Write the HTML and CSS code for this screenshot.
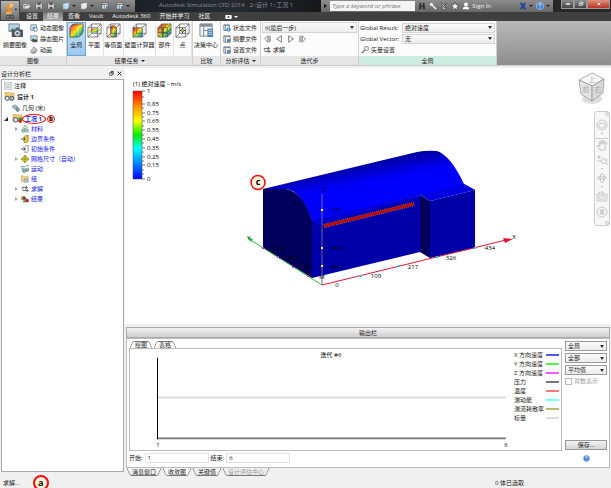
FILE: index.html
```html
<!DOCTYPE html>
<html lang="zh-CN">
<head>
  <meta charset="UTF-8">
  <meta name="viewport" content="width=device-width, initial-scale=1">
  <title>Autodesk Simulation CFD 2014</title>
  <link rel="stylesheet" href="styles.css">
</head>
<body>

  <!-- Icon sprite -->
  <svg class="sprite" aria-hidden="true">
    <defs>
      <linearGradient id="heat" x1="0" y1="0" x2="1" y2="1">
        <stop offset="0.1" stop-color="#e8271c"/><stop offset="0.35" stop-color="#f9a01b"/>
        <stop offset="0.5" stop-color="#f4e21f"/><stop offset="0.68" stop-color="#5ccb5f"/>
        <stop offset="0.95" stop-color="#2a6fd6"/>
      </linearGradient>
    </defs>
    <symbol id="i-open" viewBox="0 0 10 10"><path d="M1 8V3h3l1 1h3v1" fill="none" stroke="#eee"/><path d="M1 8l2-3h6L7 8z" fill="#ddd"/></symbol>
    <symbol id="i-save" viewBox="0 0 10 10"><path d="M1 1h8v8H1z" fill="#e8e8e8" stroke="#555"/><path d="M3 1h4v3H3zM3 6h4v3H3z" fill="#555"/></symbol>
    <symbol id="i-cube" viewBox="0 0 10 10"><path d="M1 3l3-2h5v6L6 9H1z" fill="#a9d3ea" stroke="#49728c" stroke-width=".6"/><path d="M1 3h5v6M6 3l3-2" fill="none" stroke="#fff" stroke-width=".8"/></symbol>
    <symbol id="i-cube2" viewBox="0 0 10 10"><path d="M1 3l3-2h5v6L6 9H1z" fill="#e5e5e5" stroke="#555" stroke-width=".6"/><path d="M1 3h5v6M6 3l3-2" fill="none" stroke="#fff" stroke-width=".8"/></symbol>
    <symbol id="i-layout" viewBox="0 0 10 10"><path d="M1 1h8v8H1z" fill="#eee" stroke="#555"/><path d="M1 3h8M4 3v6" stroke="#555"/><path d="M6 5h3v4H6z" fill="#4a86b8"/></symbol>
    <symbol id="i-camera" viewBox="0 0 16 16"><path d="M1 1h11v8H1z" fill="#b7d6ea" stroke="#6f8494"/><path d="M1 9l4-4 3 3 2-2 2 3z" fill="#6f9f65"/><rect x="4" y="7" width="12" height="8" rx="1" fill="#4d565e"/><path d="M8 5h4v2H8z" fill="#4d565e"/><circle cx="10" cy="11" r="3" fill="#e9eef2" stroke="#889"/><circle cx="10" cy="11" r="1.3" fill="#557"/></symbol>
    <symbol id="i-dynpic" viewBox="0 0 10 10"><path d="M1 1h7v7H1z" fill="#d8e8f2" stroke="#6f8494"/><path d="M3 4l2-1 2 1v3H3z" fill="#72a8cc"/><circle cx="7" cy="7" r="2.3" fill="#fff" stroke="#4b6f8c"/></symbol>
    <symbol id="i-statpic" viewBox="0 0 10 10"><path d="M1 1h8v6H1z" fill="#c0dbe8" stroke="#6f8494"/><path d="M1 7l3-3 2 2 1-1 2 2z" fill="#44734b"/><path d="M3 6h6v3H3z" fill="#434a50"/></symbol>
    <symbol id="i-anim" viewBox="0 0 10 10"><path d="M1 6l4-5 4 4-3 4H3z" fill="#fff" stroke="#555" stroke-width=".8"/><path d="M3 6l3-3 1 4zM1 8h5" fill="none" stroke="#555" stroke-width=".8"/></symbol>
    <symbol id="i-global" viewBox="0 0 16 16"><path d="M1 5Q3 1 6 1h9v8q-1 4-5 6H1z" fill="url(#heat)" stroke="#345" stroke-width=".8"/><path d="M1 5h9v10M10 5l5-4" fill="none" stroke="#fff" stroke-opacity=".35"/></symbol>
    <symbol id="i-box" viewBox="0 0 16 16"><path d="M1 5l4-4h10v10l-4 4H1zM1 5h10v10M11 5l4-4M5 1v10h10M5 11l-4 4" fill="none" stroke="#555b61" stroke-width=".8"/></symbol>
    <symbol id="i-plane" viewBox="0 0 16 16"><path d="M1 10l4-4h10l-4 4z" fill="url(#heat)"/><use href="#i-box"/></symbol>
    <symbol id="i-iso" viewBox="0 0 16 16"><path d="M5 4q3-3 6 0v10q-3 2-6 0z" fill="url(#heat)" stroke="#9b301c" stroke-width=".6"/><use href="#i-box"/></symbol>
    <symbol id="i-wall" viewBox="0 0 16 16"><path d="M1 5h10v10H1z" fill="url(#heat)"/><use href="#i-box"/></symbol>
    <symbol id="i-part" viewBox="0 0 16 16"><path d="M1 5l4-4h10v10l-4 4H1z" fill="url(#heat)"/><path d="M1 10h10M6 5v10l1-10 4-4M11 10l4-4" fill="none" stroke="#345" stroke-width=".8"/><use href="#i-box"/></symbol>
    <symbol id="i-point" viewBox="0 0 16 16"><use href="#i-box"/><path d="M8 5v6M5 8h6" stroke="#444"/><circle cx="8" cy="8" r="1.6" fill="#b8cc30" stroke="#333" stroke-width=".5"/></symbol>
    <symbol id="i-decision" viewBox="0 0 16 16"><path d="M1 1h13v13H1z" fill="#f4f4f4" stroke="#7b858d"/><path d="M1 1h13v3H1z" fill="#848e96"/><path d="M5 4v10M5 8h9" stroke="#7b858d"/><rect x="9" y="6" width="6" height="9" fill="#4e86b0"/><path d="M10 8h4M10 10h4M10 12h4" stroke="#dcebf5" stroke-width=".8"/></symbol>
    <symbol id="i-doc" viewBox="0 0 10 10"><path d="M1 1h8v8H1z" fill="#f3f6f8" stroke="#69747d"/><path d="M1 2h8M3 3v6" stroke="#69747d"/><path d="M5 5h4v4H5z" fill="#5689ae"/></symbol>
    <symbol id="i-docinfo" viewBox="0 0 10 10"><path d="M1 1h7v7H1z" fill="#f3f6f8" stroke="#69747d"/><path d="M1 2h7M3 3v5" stroke="#69747d"/><circle cx="7" cy="7" r="2.7" fill="#2e8ade"/><path d="M7 5v1M7 6.500v2" stroke="#fff"/></symbol>
    <symbol id="i-solve" viewBox="0 0 10 10"><path d="M1 3h7M6 1l2 2-2 1M2 7h7M7 5l2 2-2 2" fill="none" stroke="#444"/><path d="M1 5h2M5 5h2" stroke="#444"/></symbol>
    <symbol id="i-vector" viewBox="0 0 10 10"><path d="M1 9l5-5" stroke="#555" stroke-width="1.400"/><path d="M5 1h4v4L7 6 4 3z" fill="#fff" stroke="#555" stroke-width=".8"/></symbol>
    <symbol id="i-first" viewBox="0 0 10 10"><path d="M6 1v8L2 5zM9 1v8M7.500 1v8" fill="none" stroke="#555" stroke-width=".8"/></symbol>
    <symbol id="i-prev" viewBox="0 0 10 10"><path d="M8 1v8L2 5z" fill="none" stroke="#555" stroke-width=".9"/></symbol>
    <symbol id="i-note" viewBox="0 0 10 10"><path d="M1 0h8v10H1z" fill="#edf1f4" stroke="#9da7ae"/><path d="M3 3h4M3 5h4M3 7h4" stroke="#9da7ae" stroke-width=".8"/></symbol>
    <symbol id="i-design" viewBox="0 0 12 10"><path d="M1 0h4l1 1h5v7H1z" fill="#f2ca73" stroke="#c79a43" stroke-width=".6"/><circle cx="3.500" cy="7" r="2.300" fill="#dbe5ea" stroke="#3d4a52"/><circle cx="8.500" cy="7" r="2.300" fill="#9dbfd2" stroke="#3d4a52"/></symbol>
    <symbol id="i-case" viewBox="0 0 12 10"><path d="M1 0h4l1 1h5v7H1z" fill="#f2ca73" stroke="#c79a43" stroke-width=".6"/><circle cx="4" cy="6.500" r="2.500" fill="#dbe5ea" stroke="#3d4a52"/><path d="M7 4h4v3H7z" fill="#2b9a43"/><circle cx="9" cy="8" r="2" fill="#c9281c"/></symbol>
    <symbol id="i-geom" viewBox="0 0 10 10"><path d="M1 2l3-1 3 2v4L4 6 1 5z" fill="#9fb9c8" stroke="#5f7785" stroke-width=".6"/><circle cx="7" cy="7" r="2.300" fill="#7d98a8" stroke="#4d6471" stroke-width=".6"/></symbol>
    <symbol id="i-mat" viewBox="0 0 10 10"><path d="M5 0l3 3-3 2-2-2z" fill="#dfe8dc" stroke="#61876b" stroke-width=".7"/><circle cx="3" cy="7" r="2.200" fill="#a3cfae" stroke="#4c7b60" stroke-width=".7"/><circle cx="7.500" cy="7" r="2" fill="#b5cfe2" stroke="#50748d" stroke-width=".7"/></symbol>
    <symbol id="i-bound" viewBox="0 0 10 10"><path d="M4 2l3-2h2v8L7 10H4z" fill="#e4c53d" stroke="#746628" stroke-width=".7"/><path d="M0 5h4M3 3l2 2-2 2" fill="none" stroke="#333"/></symbol>
    <symbol id="i-init" viewBox="0 0 10 10"><path d="M5 2l2-2h2v8L7 10H5z" fill="#f5f5f5" stroke="#666" stroke-width=".8"/><path d="M0 5h4M3 3l2 2-2 2" fill="none" stroke="#333"/></symbol>
    <symbol id="i-mesh" viewBox="0 0 10 10"><path d="M5 0l5 5-5 5-5-5z" fill="#d4cb35" stroke="#888629" stroke-width=".7"/><path d="M5 0v10M0 5h10" stroke="#77762b" stroke-width=".7"/></symbol>
    <symbol id="i-motion" viewBox="0 0 10 10"><path d="M0 2h5M0 4h3M6 1h4" stroke="#4f80a0"/><circle cx="4" cy="7" r="2.400" fill="#83b7c9" stroke="#3e6678" stroke-width=".7"/><circle cx="8" cy="6" r="2" fill="#8ebd88" stroke="#3e6678" stroke-width=".7"/></symbol>
    <symbol id="i-group" viewBox="0 0 10 10"><path d="M0 1h4l1 1h4v6H0z" fill="#f3cf82" stroke="#c99e4a" stroke-width=".6"/><path d="M4 5h5v4H4z" fill="#aac9df" stroke="#5e8199" stroke-width=".6"/></symbol>
    <symbol id="i-result" viewBox="0 0 10 10"><path d="M0 2l4-1 3 3-2 3-5-1z" fill="#e5a323"/><circle cx="4" cy="4" r="2" fill="#3550b5"/><circle cx="7.500" cy="7" r="2.300" fill="#cb2418"/><circle cx="4" cy="8" r="1.500" fill="#2e9a44"/></symbol>
    <symbol id="i-help" viewBox="0 0 10 10"><circle cx="5" cy="5" r="4.500" fill="#3d7edb" stroke="#bcd4f2" stroke-width=".8"/><path d="M3.500 4q0-2 1.700-1.800Q7 2.500 6.300 4L5 5.300V6M5 7v1" fill="none" stroke="#fff"/></symbol>
    <symbol id="i-binoc" viewBox="0 0 10 10"><path d="M2 1h2v3h2V1h2l1 8H6V6H4v3H1z" fill="#333"/></symbol>
    <symbol id="i-key" viewBox="0 0 10 10"><circle cx="3" cy="3" r="2" fill="#f4f4f4"/><path d="M4 4l5 5" stroke="#f4f4f4" stroke-width="1.700"/></symbol>
    <symbol id="i-dish" viewBox="0 0 10 10"><path d="M2 1q0 5 6 6zM4 6L2 9h5M5 4l4-3" fill="#eee" stroke="#333" stroke-width=".8"/></symbol>
    <symbol id="i-star" viewBox="0 0 10 10"><path d="M5 0l1.500 3.500L10 4 7.500 6.300 8 10 5 8 2 10l.5-3.700L0 4l3.500-.5z" fill="#eee" stroke="#333" stroke-width=".7"/></symbol>
    <symbol id="i-user" viewBox="0 0 10 10"><circle cx="5" cy="3" r="2.500" fill="#fff"/><path d="M1 9q0-3 3-3h2q3 0 3 3z" fill="#fff"/></symbol>
    <symbol id="i-exchange" viewBox="0 0 10 10"><path d="M1 1h3l1 2 1-2h3L7 5l2 4H6L5 7 4 9H1l2-4z" fill="#2545a5"/></symbol>
  </svg>

  <header class="top">
    <button class="app-btn" aria-label="CFD">
      <svg viewBox="0 0 20 20"><path d="M5 7l5-5 4 1-1 3-4 1 1 2 3 1-2 3-5 1-1-2 3-2z" fill="#f08a1c"/><path d="M10 2l4 1-1 3-4 1zM6 12l5 0 2-2-2 3-5 1z" fill="#ffc162"/><path d="M15 8h3l-1.500 2z" fill="#222"/><text x="10" y="19">CFD</text></svg>
    </button>

    <div class="titlebar">
      <nav class="quick" aria-label="Quick access">
        <button aria-label="打开"><svg><use href="#i-open"/></svg></button>
        <button aria-label="保存"><svg><use href="#i-save"/></svg></button>
        <button aria-label="另存为"><svg><use href="#i-save"/></svg></button>
        <button class="drop spaced" aria-label="着色"><svg><use href="#i-cube"/></svg></button>
        <button class="drop" aria-label="视图"><svg><use href="#i-cube2"/></svg></button>
        <button class="spaced" aria-label="窗口"><svg><use href="#i-layout"/></svg></button>
        <button class="drop spaced" aria-label="布局"><svg><use href="#i-layout"/></svg></button>
      </nav>
      <div class="caption">Autodesk Simulation CFD 2014 &nbsp; 2::设计 1::工况 1</div>
      <div class="infocenter">
        <span class="tri-right"></span>
        <input type="text" aria-label="Search" placeholder="Type a keyword or phrase">
        <button aria-label="Find"><svg><use href="#i-binoc"/></svg></button>
        <button aria-label="Subscription"><svg><use href="#i-key"/></svg></button>
        <button aria-label="Communication"><svg><use href="#i-dish"/></svg></button>
        <button aria-label="Favorites"><svg><use href="#i-star"/></svg></button>
        <button class="signin"><svg><use href="#i-user"/></svg>Sign In</button>
        <button class="drop exchange" aria-label="Exchange"><svg><use href="#i-exchange"/></svg></button>
        <button class="drop" aria-label="Help"><svg><use href="#i-help"/></svg></button>
      </div>
      <div class="winctl">
        <button aria-label="最小化"><svg viewBox="0 0 12 8"><path d="M3 4h6" stroke="#fff" stroke-width="2"/></svg></button>
        <button aria-label="还原"><svg viewBox="0 0 12 8"><path d="M3 3h4v3H3zM5 3V1h4v4H7" fill="none" stroke="#fff"/></svg></button>
        <button class="close" aria-label="关闭"><svg viewBox="0 0 12 8"><path d="M4 2l4 4M8 2L4 6" stroke="#fff" stroke-width="1.500"/></svg></button>
      </div>
    </div>

    <nav class="tabs">
      <a href="#">设置</a>
      <a href="#" class="active">结果</a>
      <a href="#">查看</a>
      <a href="#">Vault</a>
      <a href="#">Autodesk 360</a>
      <a href="#">开始并学习</a>
      <a href="#">社区</a>
      <button class="pill drop" aria-label="最小化功能区"><svg viewBox="0 0 8 5"><rect width="8" height="5" rx="1" fill="#fff"/><path d="M2 3l2-2 2 2z" fill="#333"/></svg></button>
    </nav>
  </header>

  <section class="ribbon">
    <div class="group g-image">
      <div class="group-body">
        <button class="big"><svg><use href="#i-camera"/></svg>摘要图像</button>
        <div class="stack">
          <button><svg><use href="#i-dynpic"/></svg>动态图像</button>
          <button><svg><use href="#i-statpic"/></svg>静态图片</button>
          <button><svg><use href="#i-anim"/></svg>动画</button>
        </div>
      </div>
      <div class="group-title">图像</div>
    </div>
    <div class="group g-task">
      <div class="group-body">
        <button class="big selected"><svg><use href="#i-global"/></svg>全局</button>
        <button class="big"><svg><use href="#i-plane"/></svg>平面</button>
        <button class="big"><svg><use href="#i-iso"/></svg>等值面</button>
        <button class="big"><svg><use href="#i-wall"/></svg>壁面计算器</button>
        <button class="big"><svg><use href="#i-part"/></svg>部件</button>
        <button class="big"><svg><use href="#i-point"/></svg>点</button>
      </div>
      <div class="group-title drop">结果任务</div>
    </div>
    <div class="group g-compare">
      <div class="group-body">
        <button class="big"><svg><use href="#i-decision"/></svg>决策中心</button>
      </div>
      <div class="group-title">比较</div>
    </div>
    <div class="group g-review">
      <div class="group-body">
        <div class="stack">
          <button><svg><use href="#i-docinfo"/></svg>状态文件</button>
          <button><svg><use href="#i-doc"/></svg>摘要文件</button>
          <button><svg><use href="#i-doc"/></svg>设置文件</button>
        </div>
      </div>
      <div class="group-title drop">分析评估</div>
    </div>
    <div class="group g-step">
      <div class="group-body">
        <div class="stack">
          <select aria-label="迭代步"><option>6(最后一步)</option></select>
          <div class="player">
            <button aria-label="第一步"><svg><use href="#i-first"/></svg></button>
            <button aria-label="上一步"><svg><use href="#i-prev"/></svg></button>
            <button class="flip" aria-label="下一步"><svg><use href="#i-prev"/></svg></button>
            <button class="flip" aria-label="最后一步"><svg><use href="#i-first"/></svg></button>
          </div>
          <button><svg><use href="#i-solve"/></svg>求解</button>
        </div>
      </div>
      <div class="group-title">迭代步</div>
    </div>
    <div class="group g-global">
      <div class="group-body">
        <div class="stack">
          <div class="pair"><label for="gres">Global Result:</label><select id="gres"><option>绝对速度</option></select></div>
          <div class="pair"><label for="gvec">Global Vector:</label><select id="gvec"><option>无</option></select></div>
          <button><svg><use href="#i-vector"/></svg>矢量设置</button>
        </div>
      </div>
      <div class="group-title">全局</div>
    </div>
  </section>

  <main class="workspace">
    <aside class="study">
      <div class="study-head">
        <span>设计分析栏</span>
        <button aria-label="浮动"><svg viewBox="0 0 8 8"><path d="M1 3h4v4H1zM3 3V1h4v4H5" fill="none" stroke="#222"/><path d="M3 1h4v1H3z"/></svg></button>
        <button aria-label="关闭"><svg viewBox="0 0 8 8"><path d="M1 1l6 6M7 1L1 7" stroke="#222" stroke-width="1.500"/></svg></button>
      </div>
      <ul class="tree">
        <li><div class="row"><svg><use href="#i-note"/></svg>注释</div></li>
        <li>
          <div class="row root"><svg><use href="#i-design"/></svg>设计 1</div>
          <ul>
            <li><div class="row"><i class="twist"></i><svg><use href="#i-geom"/></svg>几何 (米)</div></li>
            <li>
              <div class="row root case"><i class="twist open"></i><svg><use href="#i-case"/></svg><span class="ringed">工况 1<b class="mark small">b</b></span></div>
              <ul class="items">
                <li><div class="row"><i class="twist more"></i><svg><use href="#i-mat"/></svg>材料</div></li>
                <li><div class="row"><i class="twist"></i><svg><use href="#i-bound"/></svg>边界条件</div></li>
                <li><div class="row"><i class="twist"></i><svg><use href="#i-init"/></svg>初始条件</div></li>
                <li><div class="row"><i class="twist more"></i><svg><use href="#i-mesh"/></svg>网格尺寸（自动）</div></li>
                <li><div class="row"><i class="twist"></i><svg><use href="#i-motion"/></svg>运动</div></li>
                <li><div class="row"><i class="twist"></i><svg><use href="#i-group"/></svg>组</div></li>
                <li><div class="row"><i class="twist more"></i><svg><use href="#i-solve"/></svg>求解</div></li>
                <li><div class="row"><i class="twist more"></i><svg><use href="#i-result"/></svg>结果</div></li>
              </ul>
            </li>
          </ul>
        </li>
      </ul>
    </aside>

    <div class="content">
      <div class="viewport">
        <svg class="scene" viewBox="125 68 486 256" preserveAspectRatio="xMinYMin meet">
          <defs>
            <linearGradient id="scale" x1="0" y1="0" x2="0" y2="1">
              <stop offset="0" stop-color="#f00"/><stop offset="0.17" stop-color="#ff8c00"/>
              <stop offset="0.34" stop-color="#ff0"/><stop offset="0.5" stop-color="#0e0"/>
              <stop offset="0.65" stop-color="#0ff"/><stop offset="0.82" stop-color="#08f"/><stop offset="1" stop-color="#00f"/>
            </linearGradient>
            <linearGradient id="roof" gradientUnits="userSpaceOnUse" x1="360" y1="165" x2="368" y2="207">
              <stop offset="0" stop-color="#0000a4"/><stop offset="0.36" stop-color="#0000f0"/>
              <stop offset="0.5" stop-color="#00f"/><stop offset="1" stop-color="#00f"/>
            </linearGradient>
          </defs>

          <!-- Colour scale -->
          <text x="133" y="86">(1) 绝对速度 - m/s</text>
          <rect x="133" y="91" width="9" height="88" fill="url(#scale)" stroke="#444" stroke-width=".5"/>
          <path d="M142 91h3M142 104h3M142 113h3M142 121h3M142 130h3M142 139h3M142 148h3M142 157h3M142 165h3M142 179h3M142 97h2M142 108h2M142 117h2M142 126h2M142 135h2M142 143h2M142 152h2M142 161h2M142 170h2M142 174h2" stroke="#444" stroke-width=".7"/>
          <g>
            <text x="147" y="93">1</text><text x="147" y="106">0.85</text><text x="147" y="115">0.75</text>
            <text x="147" y="123">0.65</text><text x="147" y="132">0.55</text><text x="147" y="141">0.45</text>
            <text x="147" y="150">0.35</text><text x="147" y="159">0.25</text><text x="147" y="167">0.15</text>
            <text x="147" y="181">0</text>
          </g>

          <!-- Model -->
          <path d="M263 189L417 152Q427 150 437 151Q451 156 464 184L475 190 420 195 312 222Q302 191 286 189z" fill="url(#roof)"/>
          <path d="M312 221L420 195V252L312 278z" fill="#0000a8"/>
          <path d="M312 221L420 195V197L318 225z" fill="#0000d2"/>
          <path d="M263 189H286Q303 192 312 221V278L263 248z" fill="#00005c"/>
          <path d="M420 195L464 184 475 190 430 201z" fill="#0000e2"/>
          <path d="M420 195L430 201V258L420 252z" fill="#00005c"/>
          <path d="M430 201L475 190V248L430 258z" fill="#0000a8"/>
          <path d="M324 226L414 204" stroke="#b9a070" stroke-width="4" stroke-dasharray="1 1"/>
          <path d="M324 226L414 204" stroke="#b80c00" stroke-width="3"/>

          <!-- Axes -->
          <path d="M322 285V194" stroke="#6a6488"/>
          <path d="M322 285L249 239" stroke="#2dbb3a"/>
          <path d="M247 237l6 2-2 3z" fill="#1fc42f"/>
          <path d="M322 285L506 240" stroke="#dc1438"/>
          <path d="M513 239l-10-1 2 5z" fill="#dc1438"/>
          <path d="M321 209h2v2h-2zM321 247h2v2h-2zM321 265h2v2h-2z" fill="#ff3"/>
          <path d="M262 247h2v2h-2zM277 256h2v2h-2zM292 266h2v2h-2zM307 275h2v2h-2z" fill="#b53cc8"/>
          <path d="M360 275h2v2h-2zM398 265h2v2h-2zM436 256h2v2h-2zM474 247h2v2h-2z" fill="#2cc"/>
          <g text-anchor="middle">
            <text x="324" y="192">Z</text><text x="514" y="239">X</text><text x="249" y="240">Y</text>
            <text x="337" y="212">197</text><text x="337" y="250">98.4</text><text x="337" y="269">49.2</text>
            <text x="278" y="250">272</text><text x="293" y="260">204</text><text x="307" y="269">136</text>
            <text x="337" y="287">0</text><text x="376" y="278">109</text><text x="413" y="269">217</text>
            <text x="451" y="260">326</text><text x="490" y="250">434</text><text x="322" y="279">M</text>
          </g>

          <circle cx="258" cy="182.500" r="7" fill="#fdf3dc" stroke="#f20d0d" stroke-width="1.500"/>
          <text x="258" y="185" text-anchor="middle" class="mark-text">c</text>
        </svg>

        <div class="navtools">
          <svg class="viewcube" viewBox="0 0 30 34"><ellipse cx="15" cy="27" rx="10" ry="5" fill="#ddd"/><path d="M2 8l13-7 12 6-12 7z" fill="#f7f7f7" stroke="#999" stroke-width=".8"/><path d="M2 8l13 6v15L4 22z" fill="#e4e4e4" stroke="#999" stroke-width=".8"/><path d="M27 7l-12 7v15l11-8z" fill="#d9d9d9" stroke="#999" stroke-width=".8"/><text x="15" y="10">上</text><text x="9" y="20">前</text><text x="21" y="20">右</text></svg>
          <div class="navbar">
            <svg class="dot" viewBox="0 0 4 4"><circle cx="2" cy="2" r="1.400"/></svg>
            <button class="nav-drop" aria-label="导航控制盘"><svg viewBox="0 0 12 12"><circle cx="6" cy="6" r="5"/><rect x="3" y="4" width="6" height="5" rx="2"/></svg></button>
            <button class="split" aria-label="平移"><svg viewBox="0 0 12 12"><path d="M4 11L1 7l1-1 2 2-1-5 1-.5 1 3V1.500h1L6.500 5l1-3.500 1 .5L8 5.500 10 3l1 .5L9 8v3z"/></svg></button>
            <button class="nav-drop" aria-label="缩放"><svg viewBox="0 0 12 12"><path d="M1 3h4M3 1v4M1 7h4"/><circle cx="8" cy="7" r="2.500"/><path d="M10 9l2 2"/></svg></button>
            <button class="nav-drop" aria-label="动态观察"><svg viewBox="0 0 12 12"><path d="M6 1l2 3H7v4h1l-2 3-2-3h1V4H4zM1 6l3-2v4zM11 6L8 4v4z"/></svg></button>
            <button aria-label="观察"><svg viewBox="0 0 12 12"><path d="M1 4h10v7H1zM3 4V2h4v2M3 6h6v3H3z"/></svg></button>
            <button aria-label="中心"><svg viewBox="0 0 12 12"><circle cx="6" cy="6" r="5"/><path d="M4 3l4 6M8 3L4 9"/><circle cx="6" cy="6" r="2"/></svg></button>
            <svg class="dot" viewBox="0 0 4 4"><circle cx="2" cy="2" r="1.400"/></svg>
          </div>
        </div>
      </div>

      <section class="output">
        <button class="output-head">输出栏</button>
        <div class="output-body">
          <div class="plot-area">
            <div class="top-tabs"><button class="on">绘图</button><button>表格</button></div>
            <div class="chart">
              <svg class="plot" viewBox="0 0 384 104" preserveAspectRatio="none">
                <path d="M27 50H376" stroke="#ddd" stroke-width="2"/>
                <path d="M27 92H376" stroke="#777" stroke-width="2"/>
                <path d="M27.500 9V93" stroke="#000"/>
                <text x="201" y="8">迭代 #6</text>
                <text x="28" y="101">1</text><text x="376" y="101">6</text>
              </svg>
              <ul class="legend">
                <li>X 方向速度<i class="c-x"></i></li>
                <li>Y 方向速度<i class="c-y"></i></li>
                <li>Z 方向速度<i class="c-z"></i></li>
                <li>压力<i class="c-p"></i></li>
                <li>温度<i class="c-t"></i></li>
                <li>湍动能<i class="c-k"></i></li>
                <li>湍流耗散率<i class="c-e"></i></li>
                <li>标量<i class="c-s"></i></li>
              </ul>
            </div>
            <div class="range">
              <label for="from">开始:</label><input id="from" type="text" value="1">
              <label for="to">结束:</label><input id="to" type="text" value="6">
            </div>
          </div>
          <div class="options">
            <select aria-label="范围"><option>全局</option></select>
            <select aria-label="变量"><option>全部</option></select>
            <select aria-label="统计"><option>平均值</option></select>
            <label class="log"><input type="checkbox" disabled>对数表示</label>
            <button class="save">保存...</button>
            <button class="help" aria-label="帮助"><svg><use href="#i-help"/></svg></button>
          </div>
        </div>
        <div class="bottom-tabs">
          <button>消息窗口</button>
          <button class="on">收敛图</button>
          <button>关键值</button>
          <button disabled>设计评估中心</button>
        </div>
      </section>
    </div>
  </main>

  <footer class="status">
    <span>求解...</span>
    <b class="mark">a</b>
    <span class="picked">0 体已选取</span>
  </footer>

</body>
</html>
```

FILE: styles.css
```css
* {
  box-sizing: border-box;
}
body {
  margin: 0;
  min-height: 100vh;
  display: flex;
  flex-direction: column;
  font: 6px/8px "Open Sans", "Noto Sans CJK SC", sans-serif;
  color: #222;
  background: #f0f0f0;
}
button, input, select {
  font: inherit;
  color: inherit;
  margin: 0;
  padding: 0;
  border: none;
  background: none;
}
button {
  display: flex;
  align-items: center;
  white-space: nowrap;
}
svg {
  display: block;
  flex: none;
}
ul {
  list-style: none;
  margin: 0;
  padding: 0;
}
.sprite {
  position: absolute;
  width: 0;
  height: 0;
}
select {
  appearance: none;
  height: 10px;
  padding: 0 8px 0 2px;
  border: 1px solid #d5d5d5;
  background: url("data:image/svg+xml,%3Csvg xmlns='http://www.w3.org/2000/svg' viewBox='0 0 4 3'%3E%3Cpath d='M0 0h4L2 3z' fill='%23333'/%3E%3C/svg%3E") no-repeat right 2px center / 4px 3px, linear-gradient(#fafafa, #ececec);
}
.drop::after {
  content: '';
  margin-left: 2px;
  border: 2px solid transparent;
  border-top-color: currentColor;
  border-bottom: none;
}

/* Title bar and tabs */
.top {
  display: grid;
  grid-template-columns: 20px 1fr;
  grid-template-rows: 12px 9px;
  background: #3f3f3f;
}
.app-btn {
  grid-row: 1 / 3;
  background: linear-gradient(#b5b5b5, #6e6e6e);
  border: 1px solid #444;
}
.app-btn svg {
  width: 18px;
  height: 19px;
}
.app-btn text {
  font-size: 5px;
  text-anchor: middle;
  fill: #111;
}
.titlebar {
  display: flex;
  background: linear-gradient(#8d8d8d, #686868);
}
.titlebar svg {
  width: 8px;
  height: 8px;
}
.quick {
  display: flex;
  gap: 4px;
  width: 115px;
  padding-left: 3px;
  color: #222;
}
.spaced {
  margin-left: 3px;
}
.caption {
  flex: 1;
  padding-left: 24px;
  line-height: 11px;
  white-space: nowrap;
  overflow: hidden;
  color: #868c92;
  background: linear-gradient(90deg, #1b2126, #262b30 50%, #15181b);
}
.infocenter {
  display: flex;
  align-items: center;
  gap: 3px;
  padding: 0 3px;
  color: #222;
}
.infocenter input {
  width: 85px;
  height: 10px;
  padding: 0 2px;
  font-style: italic;
  background: #f4f4f4;
}
.infocenter .signin {
  color: #eee;
  gap: 2px;
}
.exchange {
  padding-left: 25px;
}
.tri-right {
  border: 2px solid transparent;
  border-left: 3px solid #111;
  border-right: none;
}
.winctl {
  display: flex;
  align-items: flex-start;
  width: 58px;
  padding-left: 8px;
  background: #25282b;
}
.winctl button {
  height: 9px;
  width: 13px;
  justify-content: center;
  border: 1px solid #999;
  border-top: none;
  background: linear-gradient(#8d8d8d, #444);
}
.winctl .close {
  width: 23px;
  background: linear-gradient(#e09080, #b8301c);
}
.tabs {
  display: flex;
  gap: 1px;
  padding-left: 2px;
  line-height: 9px;
}
.tabs a {
  padding: 0 4px;
  color: #f0f0f0;
  text-decoration: none;
  white-space: nowrap;
}
.tabs .active {
  background: linear-gradient(#777, #aaa);
}
.pill {
  margin-left: 10px;
  color: #fff;
}
.pill svg {
  width: 7px;
  height: 4px;
}

/* Ribbon */
.ribbon {
  display: flex;
  height: 45px;
  border-bottom: 1px solid #ccc;
  background: linear-gradient(#b9b9b9, #8e8e8e);
}
.group {
  display: flex;
  flex-direction: column;
  flex: none;
  border-right: 1px solid #cfcfcf;
  background: #fcfcfc;
}
.group-body {
  flex: 1;
  display: flex;
  padding-top: 1px;
}
.group-title {
  display: flex;
  align-items: center;
  justify-content: center;
  height: 9px;
  background: #e6e6e6;
}
.g-image { width: 67px; }
.g-task { width: 126px; }
.g-compare { width: 28px; }
.g-review { width: 40px; }
.g-step { width: 98px; }
.g-global { width: 138px; }
.g-global .group-title {
  background: #cdebdf;
}
.g-image .group-body {
  padding-left: 2px;
}
.big {
  flex-direction: column;
  gap: 3px;
  padding: 1px 1px 0;
  border-right: 1px solid #e4e4e4;
}
.big svg {
  width: 15px;
  height: 15px;
}
.g-task .big {
  min-width: 18px;
}
.g-image .big, .g-compare .big {
  border: none;
}
.big.selected {
  border: 1px solid #6fa5d4;
  padding-top: 0;
  background: linear-gradient(#cbe3f7, #9cc8ee);
}
.stack {
  flex: 1;
  display: flex;
  flex-direction: column;
  padding: 0 1px;
}
.stack > * {
  height: 11px;
}
.stack > button {
  gap: 2px;
  padding-left: 1px;
}
.stack svg {
  width: 8px;
  height: 8px;
}
.player {
  display: flex;
  align-items: center;
  gap: 4px;
  padding-left: 1px;
}
.flip {
  transform: scaleX(-1);
}
.pair {
  display: flex;
  align-items: center;
}
.pair label {
  width: 42px;
  white-space: nowrap;
}
.pair select {
  flex: 1;
}

/* Design study bar */
.workspace {
  flex: 1;
  display: flex;
  padding-top: 2px;
}
.study {
  width: 124px;
  display: flex;
  flex-direction: column;
  padding-left: 1px;
}
.study-head {
  display: flex;
  align-items: center;
  gap: 3px;
  height: 11px;
  padding-right: 2px;
}
.study-head span {
  flex: 1;
}
.study-head svg {
  width: 5px;
  height: 5px;
}
.tree {
  flex: 1;
  padding: 0 0 0 2px;
  border: 1px solid #aaa;
  margin-bottom: 4px;
  background: #fff;
}
.row {
  display: flex;
  align-items: center;
  gap: 2px;
  height: 11px;
  white-space: nowrap;
}
.row svg {
  width: 8px;
  height: 8px;
}
.root {
  font-weight: bold;
}
.root svg {
  width: 11px;
  height: 9px;
}
.items {
  padding-left: 9px;
}
.items .row {
  height: 10px;
  color: #1616ee;
}
.case {
  color: #1616ee;
}
.twist {
  width: 6px;
}
.more::before {
  content: '';
  display: block;
  width: 0;
  margin-left: 2px;
  border: 2px solid transparent;
  border-left: 3px solid #aaa;
  border-right: none;
}
.open::before {
  content: '';
  display: block;
  width: 0;
  border: 2px solid transparent;
  border-right-color: #222;
  border-bottom-color: #222;
}
.ringed {
  position: relative;
}
.ringed::before {
  content: '';
  position: absolute;
  inset: -1px -4px -1px -3px;
  border: 1px solid #f20d0d;
  border-radius: 50%;
}
.mark {
  width: 16px;
  height: 16px;
  border: 2px solid #f20d0d;
  border-radius: 50%;
  background: #fdf3dc;
  color: #111;
  font-size: 9px;
  line-height: 11px;
  text-align: center;
}
.mark.small {
  position: absolute;
  left: 100%;
  top: 0;
  margin-left: 5px;
  width: 8px;
  height: 8px;
  border-width: 1px;
  font-size: 6px;
  line-height: 6px;
}

/* 3D view */
.content {
  flex: 1;
  min-width: 0;
  display: flex;
  flex-direction: column;
  padding-left: 1px;
}
.viewport {
  position: relative;
  flex: 1;
  background: #fff;
}
.scene {
  width: 100%;
}
.scene text {
  font-size: 6px;
  fill: #000;
}
.scene .mark-text {
  font-size: 9px;
  font-weight: bold;
}
.navtools {
  position: absolute;
  top: 4px;
  right: 1px;
  display: flex;
  flex-direction: column;
  align-items: flex-end;
  gap: 5px;
}
.viewcube {
  width: 30px;
  height: 34px;
  margin-right: 3px;
}
.viewcube text {
  font-size: 7px;
  text-anchor: middle;
  fill: #aaa;
}
.navbar {
  display: flex;
  flex-direction: column;
  align-items: center;
  gap: 1px;
  width: 16px;
  height: 115px;
  border: 1px solid #ccc;
  border-radius: 3px;
  background: #f7f7f7;
  justify-content: space-between;
}
.navbar button {
  flex-direction: column;
  gap: 2px;
}
.navbar svg {
  width: 12px;
  height: 12px;
  fill: none;
  stroke: #bbb;
  stroke-width: .8;
}
.navbar .dot {
  width: 4px;
  height: 4px;
  align-self: flex-end;
}
.nav-drop::after {
  content: '';
  border: 1px solid transparent;
  border-top-color: #888;
  border-bottom: none;
}
.split {
  border-top: 1px solid #ccc;
}

/* Output bar */
.output {
  padding: 3px 1px 0;
}
.output-head {
  width: 100%;
  height: 11px;
  justify-content: center;
  border: 1px solid #aaa;
  background: linear-gradient(#f2f2f2, #cfcfcf);
}
.output-body {
  display: flex;
  gap: 3px;
  height: 130px;
  padding: 2px;
  border: 1px solid #bbb;
  background: #fff;
}
.plot-area {
  flex: 1;
  min-width: 0;
  display: flex;
  flex-direction: column;
}
.top-tabs, .bottom-tabs {
  display: flex;
}
.top-tabs button, .bottom-tabs button {
  position: relative;
  height: 8px;
  padding: 0 6px;
}
.top-tabs button {
  height: 7px;
}

/* slanted tab edges */
.top-tabs button::before, .top-tabs button::after,
.bottom-tabs button::before, .bottom-tabs button::after {
  content: '';
  position: absolute;
  top: 0;
  bottom: 0;
  left: 2px;
  width: 50%;
  border: 1px solid #777;
  border-width: 1px 0 0 1px;
  border-top-left-radius: 2px;
  transform: skewX(-25deg);
}
.top-tabs button::after, .bottom-tabs button::after {
  left: auto;
  right: 2px;
  border-width: 1px 1px 0 0;
  border-radius: 0 2px 0 0;
  transform: skewX(25deg);
}
.bottom-tabs button::before {
  border-width: 0 0 1px 1px;
  border-radius: 0 0 0 2px;
  transform: skewX(25deg);
}
.bottom-tabs button::after {
  border-width: 0 1px 1px 0;
  border-radius: 0 0 2px 0;
  transform: skewX(-25deg);
}
.bottom-tabs .on {
  background: linear-gradient(90deg, transparent 4px, #fff 4px, #fff calc(100% - 4px), transparent calc(100% - 4px));
}
.bottom-tabs button:disabled {
  color: #999;
}
.chart {
  flex: 1;
  min-height: 0;
  display: flex;
  border: 1px solid #bbb;
}
.plot {
  flex: 1;
  min-width: 0;
  height: 100%;
}
.plot text {
  text-anchor: middle;
}
.legend {
  width: 47px;
  padding: 1px 2px 0 0;
}
.legend li {
  display: flex;
  align-items: center;
  justify-content: space-between;
  height: 9px;
  white-space: nowrap;
}
.legend i {
  width: 13px;
  height: 2px;
}
.c-x { background: #55f; }
.c-y { background: #5e5; }
.c-z { background: #f5f; }
.c-p { background: #777; }
.c-t { background: #f77; }
.c-k { background: #7ff; }
.c-e { background: #bb7; }
.c-s { background: #ddd; }
.range {
  display: flex;
  align-items: center;
  gap: 2px;
  height: 14px;
}
.range input {
  width: 64px;
  height: 10px;
  padding: 0 2px;
  border: 1px solid #e2e2e2;
}
.options {
  width: 42px;
  display: flex;
  flex-direction: column;
  gap: 2px;
}
.options select {
  border-color: #999;
  background-color: #ddd;
}
.log {
  display: flex;
  align-items: center;
  gap: 2px;
  color: #999;
  white-space: nowrap;
}
.log input {
  appearance: none;
  width: 7px;
  height: 7px;
  border: 1px solid #bbb;
}
.save {
  height: 10px;
  margin-top: auto;
  justify-content: center;
  border: 1px solid #999;
  background: linear-gradient(#f4f4f4, #d4d4d4);
}
.help {
  height: 13px;
  justify-content: center;
}
.help svg {
  width: 7px;
  height: 7px;
}

/* Status bar */
.status {
  display: flex;
  align-items: center;
  height: 14px;
  padding: 0 87px 0 3px;
  gap: 13px;
}
.picked {
  margin-left: auto;
}
```
